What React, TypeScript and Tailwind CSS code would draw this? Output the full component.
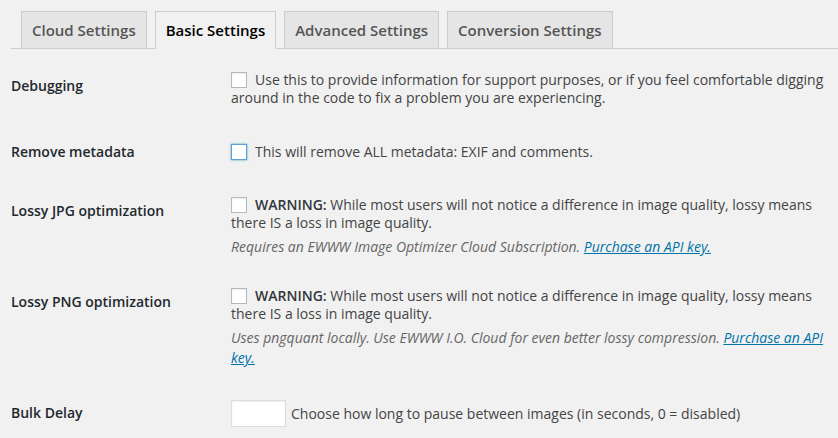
import React from "react";

const Box = ({ focus = false }: { focus?: boolean }) => (
  <span
    className={
      "mr-[8px] inline-block h-[16px] w-[16px] align-[-3px] bg-white " +
      (focus
        ? "border border-[#5b9dd9] shadow-[0_0_2px_rgba(30,140,190,0.8)]"
        : "border border-[#b4b9be] shadow-[inset_0_1px_2px_rgba(0,0,0,0.07)]")
    }
  />
);

const tabs = ["Cloud Settings", "Basic Settings", "Advanced Settings", "Conversion Settings"];

export default function App() {
  return (
    <div className="min-h-screen w-full bg-[#f1f1f1] font-['Open_Sans',sans-serif] text-[14px] text-[#444] antialiased">
      <div className="pl-[11px]">
        <nav className="flex gap-[8px] border-b border-[#ccc] pl-[10px] pt-[11px]">
          {tabs.map((t) => {
            const active = t === "Basic Settings";
            return (
              <span
                key={t}
                className={
                  "-mb-px border border-[#ccc] px-[10px] py-[6px] text-[15px] font-semibold leading-[24px] " +
                  (active
                    ? "border-b-[#f1f1f1] bg-[#f1f1f1] text-black"
                    : "bg-[#e5e5e5] text-[#555]")
                }
              >
                {t}
              </span>
            );
          })}
        </nav>

        <div className="mt-[8px] flex flex-col">
          {/* Debugging */}
          <div className="flex">
            <div className="w-[220px] shrink-0 pt-[20px] font-semibold leading-[18px] text-[#23282d]">Debugging</div>
            <div className="flex-1 pb-[21px] pr-[10px] pt-[14px] leading-[18px]">
              <Box />
              Use this to provide information for support purposes, or if you feel comfortable digging
              <br />
              around in the code to fix a problem you are experiencing.
            </div>
          </div>

          {/* Remove metadata */}
          <div className="flex">
            <div className="w-[220px] shrink-0 pt-[15px] font-semibold leading-[18px] text-[#23282d]">Remove metadata</div>
            <div className="flex-1 pb-[21px] pr-[10px] pt-[15px] leading-[18px]">
              <Box focus />
              This will remove ALL metadata: EXIF and comments.
            </div>
          </div>

          {/* Lossy JPG */}
          <div className="flex">
            <div className="w-[220px] shrink-0 pt-[20px] font-semibold leading-[18px] text-[#23282d]">Lossy JPG optimization</div>
            <div className="flex-1 pb-[16px] pr-[10px] pt-[14px] leading-[18px]">
              <div>
                <Box />
                <strong className="font-semibold text-[#32373c]">WARNING:</strong> While most users will not notice a difference in image quality, lossy means
                <br />
                there IS a loss in image quality.
              </div>
              <p className="mt-[5px] text-[14px] italic leading-[20px] text-[#666]">
                Requires an EWWW Image Optimizer Cloud Subscription.{" "}
                <a className="text-[#0073aa] underline">Purchase an API key.</a>
              </p>
            </div>
          </div>

          {/* Lossy PNG */}
          <div className="flex">
            <div className="w-[220px] shrink-0 pt-[20px] font-semibold leading-[18px] text-[#23282d]">Lossy PNG optimization</div>
            <div className="flex-1 pb-[16px] pr-[10px] pt-[14px] leading-[18px]">
              <div>
                <Box />
                <strong className="font-semibold text-[#32373c]">WARNING:</strong> While most users will not notice a difference in image quality, lossy means
                <br />
                there IS a loss in image quality.
              </div>
              <p className="mt-[5px] text-[14px] italic leading-[20px] text-[#666]">
                Uses pngquant locally. Use EWWW I.O. Cloud for even better lossy compression.{" "}
                <a className="text-[#0073aa] underline">
                  Purchase an API
                  <br />
                  key.
                </a>
              </p>
            </div>
          </div>

          {/* Bulk Delay */}
          <div className="flex">
            <div className="w-[220px] shrink-0 pt-[20px] font-semibold leading-[18px] text-[#23282d]">Bulk Delay</div>
            <div className="flex flex-1 items-center gap-[5px] pr-[10px] pt-[16px] leading-[18px]">
              <span className="inline-block h-[27px] w-[55px] border border-[#ddd] bg-white shadow-[inset_0_1px_2px_rgba(0,0,0,0.07)]" />
              <span>Choose how long to pause between images (in seconds, 0 = disabled)</span>
            </div>
          </div>
        </div>
      </div>
    </div>
  );
}
